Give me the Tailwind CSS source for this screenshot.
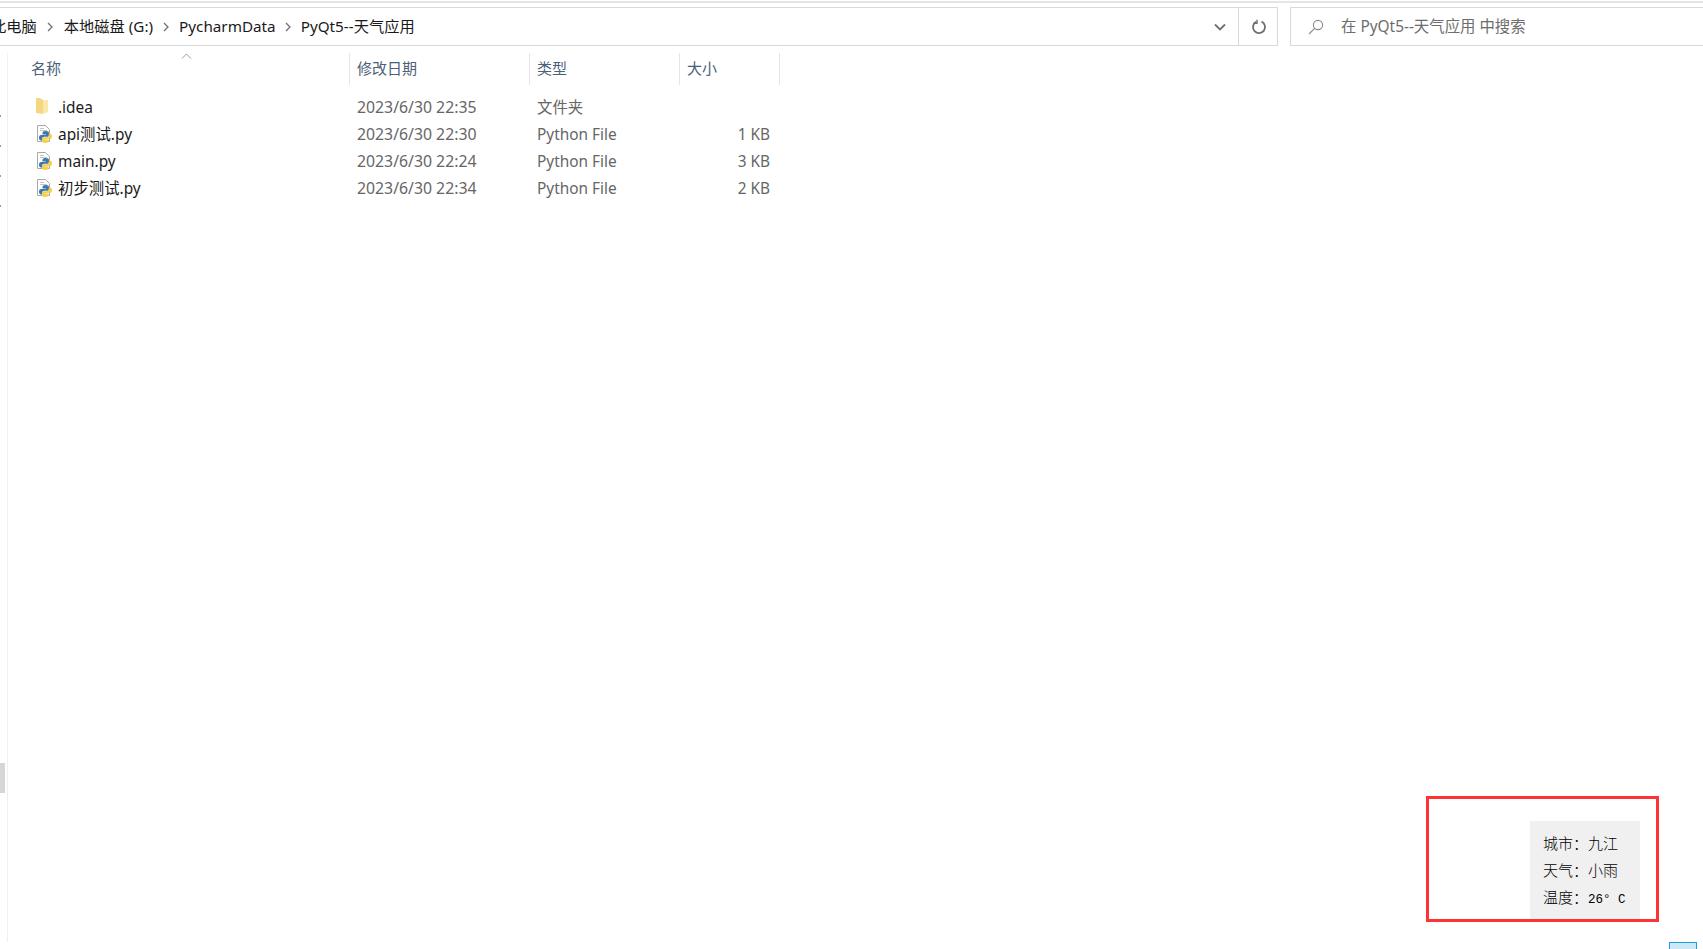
<!DOCTYPE html>
<html lang="zh-CN">
<head>
  <meta charset="UTF-8">
  <title>PyQt5--天气应用</title>
  <script src="https://cdn.jsdelivr.net/npm/@tailwindcss/browser@4"></script>
</head>
<body class="bg-white h-[949px] w-[1703px] overflow-hidden relative font-['Noto_Sans','Noto_Sans_CJK_SC',sans-serif] text-[15.4px] text-[#1a1a1a]">

  <!-- top edge -->
  <div class="h-[2px] mt-px bg-[#e5e5e5]"></div>

  <!-- address bar -->
  <div class="flex mt-1 h-[39px] gap-[12px]">
    <div class="flex-none w-[1278px] flex items-center border-y border-r border-[#d9d9d9] overflow-hidden">
      <div class="flex-1 flex items-center -ml-[9px] whitespace-nowrap leading-none text-[15.25px]">
        <span>此电脑</span>
        <svg class="w-[8px] h-[10px] mx-[9.500px] text-[#707070]" viewBox="0 0 8 10" fill="none" stroke="currentColor" stroke-width="1.3"><path d="M2 1l4 4-4 4"/></svg>
        <span>本地磁盘 (G:)</span>
        <svg class="w-[8px] h-[10px] mx-[9px] text-[#707070]" viewBox="0 0 8 10" fill="none" stroke="currentColor" stroke-width="1.3"><path d="M2 1l4 4-4 4"/></svg>
        <span>PycharmData</span>
        <svg class="w-[8px] h-[10px] mx-[8.500px] text-[#707070]" viewBox="0 0 8 10" fill="none" stroke="currentColor" stroke-width="1.3"><path d="M2 1l4 4-4 4"/></svg>
        <span>PyQt5--天气应用</span>
      </div>
      <div class="w-[39px] h-full flex items-center justify-center pl-[2px]">
        <svg class="w-[12px] h-[8px] text-[#707070]" viewBox="0 0 12 8" fill="none" stroke="currentColor" stroke-width="1.8"><path d="M1 1.500l5 5 5-5"/></svg>
      </div>
      <div class="w-[39px] h-full flex items-center justify-center border-l border-[#d9d9d9] pl-[2px]">
        <svg class="w-[16px] h-[16px] text-[#6e6e6e]" viewBox="0 0 16 16" fill="none" stroke="currentColor" stroke-width="1.8"><path d="M10.500 2.600A6 6 0 1 1 5 2.900"/><path d="M6 0.800v3.600H2.400" stroke-width="1.400"/></svg>
      </div>
    </div>
    <div class="flex-1 flex items-center border-y border-l border-[#d9d9d9] pl-[17px] text-[#6d6d6d] leading-none whitespace-nowrap">
      <svg class="w-[16px] h-[16px] mr-[17px] text-[#8a8a8a]" viewBox="0 0 16 16" fill="none" stroke="currentColor" stroke-width="1.1"><circle cx="10" cy="6" r="4.600"/><path d="M6.600 9.400L1 15"/></svg>
      <span>在 PyQt5--天气应用 中搜索</span>
    </div>
  </div>

  <!-- file list -->
  <div class="ml-[7px] mt-[7px] h-[889px] w-fit border-l border-[#f0f0f0]">
    <div class="relative flex h-[32px] text-[#4c607a] text-[15px] leading-none">
      <div class="w-[342px] flex items-center pl-[23px] pb-[2px] border-r border-[#e5e5e5]">名称</div>
      <svg class="absolute left-[173px] top-0 w-[11px] h-[6px] text-[#9a9a9a]" viewBox="0 0 11 6" fill="none" stroke="currentColor"><path d="M1 5.500l4.500-4.500 4.500 4.500"/></svg>
      <div class="w-[180px] flex items-center pl-[7px] pb-[2px] border-r border-[#e5e5e5]">修改日期</div>
      <div class="w-[150px] flex items-center pl-[7px] pb-[2px] border-r border-[#e5e5e5]">类型</div>
      <div class="w-[100px] flex items-center pl-[7px] pb-[2px] border-r border-[#e5e5e5]">大小</div>
    </div>

    <div class="mt-[9px] flex flex-col">
      <div class="flex h-[27px] items-center leading-none">
        <div class="w-[342px] flex items-center pl-[28px]">
          <svg class="w-[12px] h-[18px] mr-[10px] -mt-[3px]" viewBox="0 0 12 18"><path d="M0 1h4l3 2v14l-7-1z" fill="#f5d77f"/><path d="M7 3h5v12l-5 2z" fill="#fbe7a8"/></svg>
          <span>.idea</span>
        </div>
        <div class="w-[180px] pl-[7px] text-[#666] text-[15.8px]">2023/6/30 22:35</div>
        <div class="w-[150px] pl-[7px] text-[#666]">文件夹</div>
        <div class="w-[100px]"></div>
      </div>
      <div class="flex h-[27px] items-center leading-none">
        <div class="w-[342px] flex items-center pl-[29px]">
          <svg class="w-[16px] h-[18px] mr-[5px] -mt-[2px]" viewBox="0 0 16 18"><path d="M.5.5h8l4 4v12H.5z" fill="#fff" stroke="#a8a8a8"/><path d="M3 3.500h4M3 5.500h7" stroke="#c4c4c4"/><path d="M8.500 6c-2 0-3 .8-3 2v1.500H9v.6H4c-1.200 0-2 1-2 2.700s.8 2.700 2 2.700h1.200v-1.700c0-1.100.9-2 2-2h3c1 0 1.800-.8 1.800-1.800V8c0-1.200-1-2-3.500-2z" fill="#3a78ad"/><path d="M8.500 6c-2 0-3 .8-3 2v1.500H9v.6H4c-1.200 0-2 1-2 2.700s.8 2.700 2 2.700h1.200v-1.700c0-1.100.9-2 2-2h3c1 0 1.800-.8 1.800-1.800V8c0-1.200-1-2-3.500-2z" fill="#f7cf4d" transform="rotate(180 8.500 12)"/></svg>
          <span>api测试.py</span>
        </div>
        <div class="w-[180px] pl-[7px] text-[#666] text-[15.8px]">2023/6/30 22:30</div>
        <div class="w-[150px] pl-[7px] text-[#666]">Python File</div>
        <div class="w-[100px] pr-[10px] text-right text-[#666]">1 KB</div>
      </div>
      <div class="flex h-[27px] items-center leading-none">
        <div class="w-[342px] flex items-center pl-[29px]">
          <svg class="w-[16px] h-[18px] mr-[5px] -mt-[2px]" viewBox="0 0 16 18"><path d="M.5.5h8l4 4v12H.5z" fill="#fff" stroke="#a8a8a8"/><path d="M3 3.500h4M3 5.500h7" stroke="#c4c4c4"/><path d="M8.500 6c-2 0-3 .8-3 2v1.500H9v.6H4c-1.200 0-2 1-2 2.700s.8 2.700 2 2.700h1.200v-1.700c0-1.100.9-2 2-2h3c1 0 1.800-.8 1.800-1.800V8c0-1.200-1-2-3.500-2z" fill="#3a78ad"/><path d="M8.500 6c-2 0-3 .8-3 2v1.500H9v.6H4c-1.200 0-2 1-2 2.700s.8 2.700 2 2.700h1.200v-1.700c0-1.100.9-2 2-2h3c1 0 1.800-.8 1.800-1.800V8c0-1.200-1-2-3.500-2z" fill="#f7cf4d" transform="rotate(180 8.500 12)"/></svg>
          <span>main.py</span>
        </div>
        <div class="w-[180px] pl-[7px] text-[#666] text-[15.8px]">2023/6/30 22:24</div>
        <div class="w-[150px] pl-[7px] text-[#666]">Python File</div>
        <div class="w-[100px] pr-[10px] text-right text-[#666]">3 KB</div>
      </div>
      <div class="flex h-[27px] items-center leading-none">
        <div class="w-[342px] flex items-center pl-[29px]">
          <svg class="w-[16px] h-[18px] mr-[5px] -mt-[2px]" viewBox="0 0 16 18"><path d="M.5.5h8l4 4v12H.5z" fill="#fff" stroke="#a8a8a8"/><path d="M3 3.500h4M3 5.500h7" stroke="#c4c4c4"/><path d="M8.500 6c-2 0-3 .8-3 2v1.500H9v.6H4c-1.200 0-2 1-2 2.700s.8 2.700 2 2.700h1.200v-1.700c0-1.100.9-2 2-2h3c1 0 1.800-.8 1.800-1.800V8c0-1.200-1-2-3.500-2z" fill="#3a78ad"/><path d="M8.500 6c-2 0-3 .8-3 2v1.500H9v.6H4c-1.200 0-2 1-2 2.700s.8 2.700 2 2.700h1.200v-1.700c0-1.100.9-2 2-2h3c1 0 1.800-.8 1.800-1.800V8c0-1.200-1-2-3.500-2z" fill="#f7cf4d" transform="rotate(180 8.500 12)"/></svg>
          <span>初步测试.py</span>
        </div>
        <div class="w-[180px] pl-[7px] text-[#666] text-[15.8px]">2023/6/30 22:34</div>
        <div class="w-[150px] pl-[7px] text-[#666]">Python File</div>
        <div class="w-[100px] pr-[10px] text-right text-[#666]">2 KB</div>
      </div>
    </div>
  </div>

  <!-- nav pane expander arrows, only their tips show at the left edge -->
  <div class="absolute left-0 top-[115px] w-px h-[2px] bg-[#999]"></div>
  <div class="absolute left-0 top-[145px] w-px h-[2px] bg-[#999]"></div>
  <div class="absolute left-0 top-[175px] w-px h-[2px] bg-[#999]"></div>
  <div class="absolute left-0 top-[205px] w-px h-[2px] bg-[#999]"></div>

  <!-- scrollbar thumb of the nav pane, cut off at the left -->
  <div class="absolute left-0 top-[763px] w-[5px] h-[30px] bg-[#d6d6d6]"></div>

  <!-- annotation box over the weather widget -->
  <div class="absolute left-[1426px] top-[796px] w-[233px] h-[126px] border-[3px] border-[#ff3333]">
    <div class="absolute left-[101px] top-[22px] w-[110px] h-[98px] bg-[#f0f0f0] pl-[13px] pt-[8px] font-['Noto_Sans_CJK_SC',sans-serif] font-light text-[15px] text-black leading-[27px] whitespace-nowrap">
      <div>城市<span class="font-['Noto_Sans_CJK_TC',sans-serif]">：</span>九江</div>
      <div>天气<span class="font-['Noto_Sans_CJK_TC',sans-serif]">：</span>小雨</div>
      <div>温度<span class="font-['Noto_Sans_CJK_TC',sans-serif]">：</span><span class="font-['Liberation_Mono',monospace] text-[12.5px]">26° C</span></div>
    </div>
  </div>

  <!-- taskbar corner -->
  <div class="absolute left-[1669px] top-[942px] w-[28px] h-[7px] bg-[#cce8f6] border-t border-x border-[#1e9fe0]"></div>
</body>
</html>
